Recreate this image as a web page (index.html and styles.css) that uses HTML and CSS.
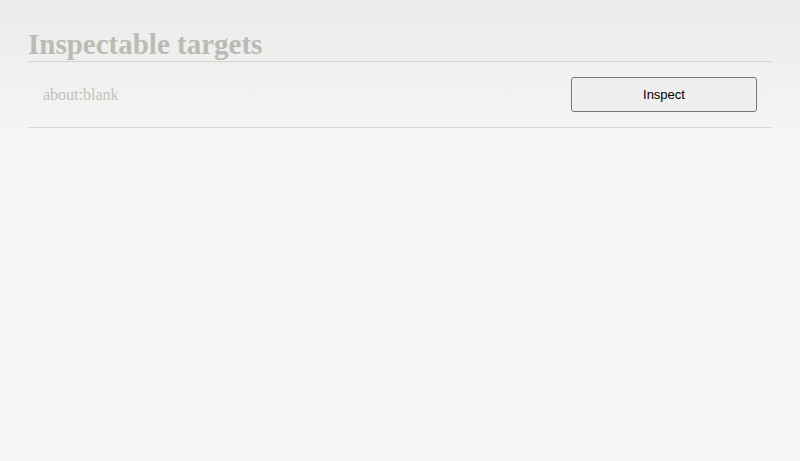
FILE: index.html
```html
<!DOCTYPE html>
<html>
<head>
	<title>Inspectable targets</title>
	<meta charset="utf-8">
	<link rel="stylesheet" href="styles.css">
</head>
<body>
	<div class="container">
		<h1>Inspectable targets</h1>
		<div class="targets">
			<div class="target">
				<span class="target-url">about:blank</span>
				<button type="button">Inspect</button>
			</div>
		</div>
	</div>
</body>
</html>
```

FILE: styles.css
```css
html {
	background: #f5f5f3;
}

body {
	margin: 0;
	background-color: #f5f5f3;
	background-image: linear-gradient(to bottom, #ebebeb, #f5f5f3);
	background-size: 100% 140px;
	background-repeat: no-repeat;
	font-family: "Liberation Serif", serif;
}

.container {
	padding: 0 28px;
}

h1 {
	margin: 0;
	padding-top: 27px;
	font-size: 29px;
	line-height: 34px;
	font-weight: bold;
	color: #bbbbb5;
	border-bottom: 1px solid #d6d6d4;
}

.target {
	display: flex;
	align-items: center;
	justify-content: space-between;
	padding: 15px;
	height: 35px;
	border-bottom: 1px solid #d6d6d4;
}

.target-url {
	font-size: 16px;
	color: #c2c2bd;
}

button {
	width: 186px;
	height: 35px;
	background-color: #efefef;
	border: 1px solid #767676;
	border-radius: 3px;
	font-family: "Liberation Sans", sans-serif;
	font-size: 13px;
	color: #000;
	padding: 0;
}
```
